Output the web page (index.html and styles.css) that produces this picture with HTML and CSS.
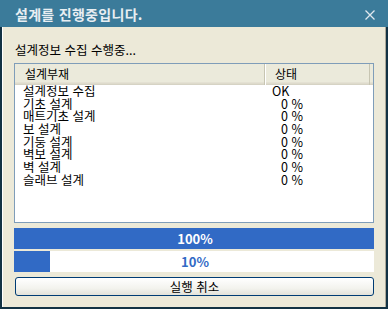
FILE: index.html
```html
<!DOCTYPE html>
<html lang="ko">
<head>
<meta charset="utf-8">
<title>설계를 진행중입니다.</title>
<link rel="stylesheet" href="styles.css">
</head>
<body>
<div class="window">
  <div class="titlebar">
    <span class="title">설계를 진행중입니다.</span>
    <svg class="close" width="10" height="10" viewBox="0 0 10 10"><path d="M0.5 0.5 L9.5 9.5 M9.5 0.5 L0.5 9.5" stroke="#dfe8ee" stroke-width="1.3" fill="none"/></svg>
  </div>
  <div class="body">
    <div class="status">설계정보 수집 수행중...</div>
    <div class="listbox">
      <div class="header">
        <div class="hcell c1">설계부재</div>
        <div class="hcell c2">상태</div>
        <div class="hcell c3"></div>
      </div>
      <div class="rows">
        <div class="row"><span class="name">설계정보 수집</span><span class="state ok">OK</span></div>
        <div class="row"><span class="name">기초 설계</span><span class="state">0 %</span></div>
        <div class="row"><span class="name">매트기초 설계</span><span class="state">0 %</span></div>
        <div class="row"><span class="name">보 설계</span><span class="state">0 %</span></div>
        <div class="row"><span class="name">기둥 설계</span><span class="state">0 %</span></div>
        <div class="row"><span class="name">벽보 설계</span><span class="state">0 %</span></div>
        <div class="row"><span class="name">벽 설계</span><span class="state">0 %</span></div>
        <div class="row"><span class="name">슬래브 설계</span><span class="state">0 %</span></div>
      </div>
    </div>
    <div class="progress full"><span class="ptext">100%</span></div>
    <div class="progress part"><div class="fill" style="width:10%"></div><span class="ptext">10%</span></div>
    <button class="btn">실행 취소</button>
  </div>
</div>
</body>
</html>
```
FILE: styles.css
```css
html, body {
  margin: 0;
  padding: 0;
  width: 388px;
  height: 309px;
  overflow: hidden;
}
body {
  font-family: "Noto Sans CJK KR", "Noto Sans", sans-serif;
  font-size: 12px;
  color: #000;
}
.window {
  width: 388px;
  height: 309px;
  box-sizing: border-box;
  display: flex;
  flex-direction: column;
  background: #ece9d8;
}
.titlebar {
  height: 27px;
  flex: none;
  background: #3b7b9a;
  display: flex;
  align-items: center;
  justify-content: space-between;
  padding: 0 13px 0 15px;
  box-sizing: border-box;
}
.title {
  color: #e8eef2;
  font-weight: bold;
  font-size: 14px;
  letter-spacing: 0.3px;
  margin-top: 1px;
}
.close {
  display: block;
  margin-top: 3px;
}
.body {
  flex: 1;
  border-left: 2px solid #123244;
  border-right: 2px solid #123244;
  border-bottom: 2px solid #123244;
  box-shadow: inset 1px 0 0 #ffffff, inset -1px 0 0 #aca899;
  padding: 10px 12px 0 12px;
  display: flex;
  flex-direction: column;
}
.status {
  height: 26px;
  line-height: 26px;
  padding-left: 1px;
  font-size: 12.5px;
}
.listbox {
  height: 160px;
  box-sizing: border-box;
  border: 1px solid #7f9db9;
  background: #fff;
  display: flex;
  flex-direction: column;
}
.header {
  height: 21px;
  flex: none;
  display: flex;
  background: #ebeadb;
  box-shadow: inset 0 -1px 0 #d6d3c4, inset 0 -2px 0 #dedbcc, inset 0 -3px 0 #e4e1d3;
}
.hcell {
  height: 21px;
  line-height: 20px;
  box-sizing: border-box;
}
.c1 {
  width: 250px;
  padding-left: 10px;
  border-right: 1px solid #c7c5b2;
  box-shadow: 1px 0 0 #fff;
}
.c2 {
  width: 105px;
  padding-left: 10px;
  border-right: 1px solid #c7c5b2;
}
.c3 {
  flex: 1;
}
.rows {
  display: flex;
  flex-direction: column;
}
.row {
  height: 12.7px;
  line-height: 12.7px;
  display: flex;
  font-size: 12.5px;
}
.name {
  width: 250px;
  box-sizing: border-box;
  padding-left: 8px;
}
.state {
  padding-left: 16px;
}
.state.ok {
  padding-left: 7px;
}
.progress {
  position: relative;
  height: 21px;
  flex: none;
  margin-top: 5px;
  display: flex;
  align-items: center;
  justify-content: center;
  font-weight: bold;
  font-size: 13px;
}
.progress.full {
  background: #316ac5;
  color: #fff;
}
.progress.part {
  margin-top: 2px;
  background: #fff;
  color: #316ac5;
}
.fill {
  position: absolute;
  left: 0;
  top: 0;
  bottom: 0;
  background: #316ac5;
}
.ptext {
  position: relative;
  padding-left: 2px;
}
.btn {
  margin-top: 5px;
  margin-left: 1px;
  height: 19px;
  box-sizing: border-box;
  border: 1px solid #003c74;
  border-radius: 3px;
  background: linear-gradient(#ffffff, #f3f3ee 60%, #e3e2da);
  font-family: "Noto Sans CJK KR", "Noto Sans", sans-serif;
  font-size: 12.5px;
  color: #000;
  padding: 0;
  line-height: 16px;
}
```
